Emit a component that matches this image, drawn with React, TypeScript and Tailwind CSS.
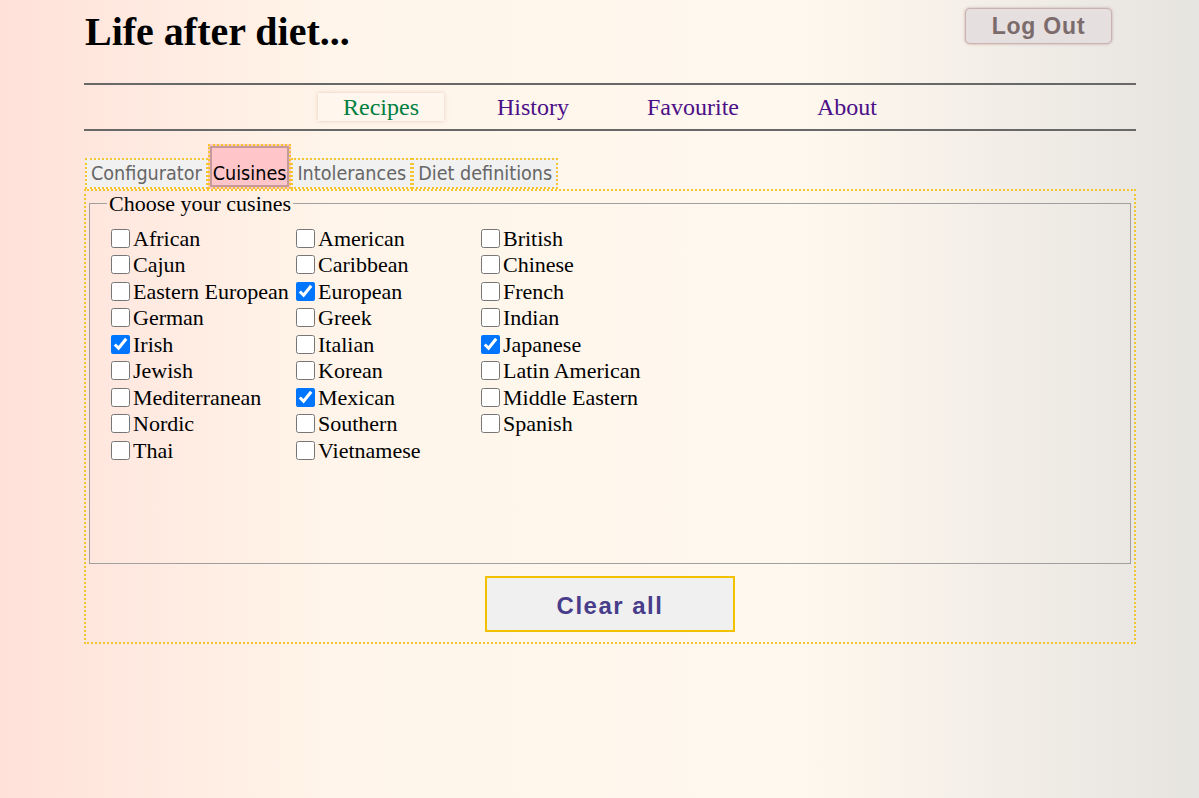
import React, { useState } from "react";

const cuisines = [
  "African", "American", "British",
  "Cajun", "Caribbean", "Chinese",
  "Eastern European", "European", "French",
  "German", "Greek", "Indian",
  "Irish", "Italian", "Japanese",
  "Jewish", "Korean", "Latin American",
  "Mediterranean", "Mexican", "Middle Eastern",
  "Nordic", "Southern", "Spanish",
  "Thai", "Vietnamese",
];

const tabs = ["Configurator", "Cuisines", "Intolerances", "Diet definitions"];
const navItems = ["Recipes", "History", "Favourite", "About"];

export default function App() {
  const [checked, setChecked] = useState<Record<string, boolean>>({
    European: true,
    Irish: true,
    Japanese: true,
    Mexican: true,
  });

  return (
    <div className="min-h-screen w-full bg-[linear-gradient(to_right,#ffe1d9_0%,#fff5ea_28%,#fff8ee_66%,#e6e4e0_100%)] font-['Liberation_Serif',serif]">
      <div className="ml-[84px] w-[1052px]">
        {/* header */}
        <div className="flex h-[83px] items-start justify-between">
          <h1 className="mt-[9px] pl-[1px] text-[40px] font-bold leading-[46px] text-black">Life after diet...</h1>
          <button className="mt-[8px] mr-[24px] h-[36px] w-[147px] rounded-[5px] border border-[#c8b2b2] bg-[#e5dfe0] font-['Liberation_Sans',sans-serif] text-[23px] font-bold tracking-[0.8px] text-[#7b6b6b] shadow-[0_0_3px_rgba(170,120,120,0.6)]">
            Log Out
          </button>
        </div>

        {/* nav */}
        <nav className="flex h-[48px] items-center justify-center gap-[28px] border-y-2 border-[#686868]">
          {navItems.map((n, i) => (
            <div
              key={n}
              className={
                i === 0
                  ? "h-[28px] bg-[#fff7ee] px-[25px] text-[24px] leading-[28px] text-[#008040] shadow-[0_0_4px_rgba(215,160,150,0.55)]"
                  : "h-[28px] px-[25px] text-[24px] leading-[28px] text-[#4b0f88]"
              }
            >
              {n}
            </div>
          ))}
        </nav>

        {/* tabs */}
        <div className="mt-[13px] flex items-end pl-[1px] font-['DejaVu_Sans_Condensed','DejaVu_Sans',sans-serif] text-[19.6px]">
          {tabs.map((t, i) =>
            i === 1 ? (
              <div
                key={t}
                className="h-[45px] border-2 border-dotted border-[#f5c52e] bg-[#ffc5c8] px-[3px] pt-[14px] leading-[27px] text-black shadow-[inset_0_0_0_2px_#c49a9a]"
              >
                {t}
              </div>
            ) : (
              <div
                key={t}
                className="h-[31px] border-2 border-dotted border-[#f5c52e] bg-[#f1f1f1] px-[4px] leading-[27px] text-[#666]"
              >
                {t}
              </div>
            )
          )}
        </div>

        {/* panel */}
        <div className="border-2 border-dotted border-[#f5c52e] px-[3px] pb-[10px]">
          <fieldset className="h-[373px] border border-[#a0a0a0] px-[17px]">
            <legend className="px-[2px] text-[22px] leading-[25px] text-black">Choose your cusines</legend>
            <div className="mt-[9px] grid grid-cols-[185px_185px_185px]">
              {cuisines.map((c) => (
                <label key={c} className="flex h-[26.5px] items-center text-[22px] text-black">
                  <input
                    type="checkbox"
                    checked={!!checked[c]}
                    onChange={() => setChecked({ ...checked, [c]: !checked[c] })}
                    className="ml-[4px] mr-[3px] h-[19px] w-[19px]"
                  />
                  {c}
                </label>
              ))}
            </div>
          </fieldset>
          <div className="mt-[12px] flex justify-center">
            <button
              onClick={() => setChecked({})}
              className="h-[56px] w-[250px] border-2 border-[#f2c200] bg-[#f0f0f0] pt-[3px] font-['Liberation_Sans',sans-serif] text-[24px] font-bold tracking-[1.5px] text-[#483d8b]"
            >
              Clear all
            </button>
          </div>
        </div>
      </div>
    </div>
  );
}
